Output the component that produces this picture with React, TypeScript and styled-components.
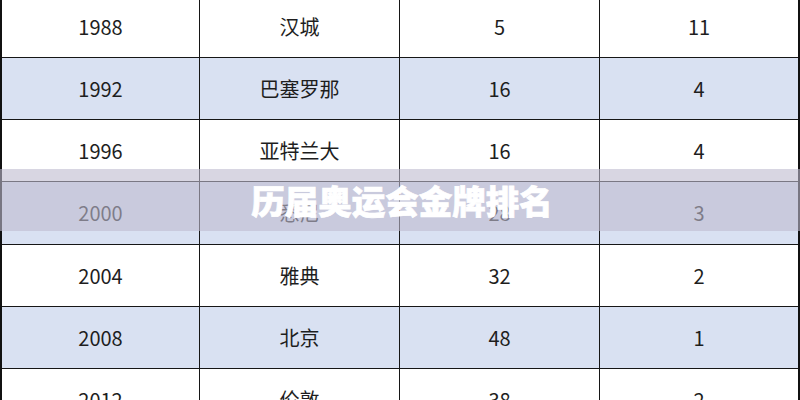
import React from "react";
import styled, { createGlobalStyle } from "styled-components";

const Global = createGlobalStyle`
  html, body { margin: 0; padding: 0; background: #ffffff; }
  body { width: 800px; height: 400px; overflow: hidden; font-family: "Noto Sans CJK SC", "Noto Sans", sans-serif; }
`;

const Page = styled.div`
  position: relative;
  width: 800px;
  height: 400px;
  overflow: hidden;
  background: #ffffff;
`;

const Table = styled.div`
  display: flex;
  flex-direction: column;
  margin-top: -4.2px;
  width: 800px;
  box-sizing: border-box;
  border-left: 2px solid #111;
  border-right: 2px solid #111;
`;

const Row = styled.div<{ $alt: boolean }>`
  display: grid;
  grid-template-columns: 198px 200px 200px 198px;
  height: 62.2px;
  box-sizing: border-box;
  border-bottom: 1.4px solid #161616;
  background: ${(p) => (p.$alt ? "#d9e1f2" : "#ffffff")};
`;

const Cell = styled.div<{ $last?: boolean }>`
  display: flex;
  align-items: center;
  justify-content: center;
  font-size: 20px;
  color: #1e1e1e;
  border-right: ${(p) => (p.$last ? "none" : "1.4px solid #161616")};
`;

const Banner = styled.div`
  position: absolute;
  left: 0;
  top: 169px;
  width: 800px;
  height: 62px;
  background: rgba(190, 187, 207, 0.6);
  display: flex;
  align-items: center;
  justify-content: center;
`;

const Title = styled.div`
  color: #ffffff;
  font-size: 33.5px;
  font-weight: 900;
  font-family: "Noto Sans CJK SC", sans-serif;
  -webkit-text-stroke: 0.7px #ffffff;
  padding-left: 4px;
  padding-bottom: 2px;
`;

const rows = [
  ["1988", "汉城", "5", "11"],
  ["1992", "巴塞罗那", "16", "4"],
  ["1996", "亚特兰大", "16", "4"],
  ["2000", "悉尼", "28", "3"],
  ["2004", "雅典", "32", "2"],
  ["2008", "北京", "48", "1"],
  ["2012", "伦敦", "38", "2"],
];

export default function App() {
  return (
    <Page>
      <Global />
      <Table>
        {rows.map((r, i) => (
          <Row key={r[0]} $alt={i % 2 === 1}>
            {r.map((c, j) => (
              <Cell key={j} $last={j === 3}>
                {c}
              </Cell>
            ))}
          </Row>
        ))}
      </Table>
      <Banner>
        <Title>历届奥运会金牌排名</Title>
      </Banner>
    </Page>
  );
}
